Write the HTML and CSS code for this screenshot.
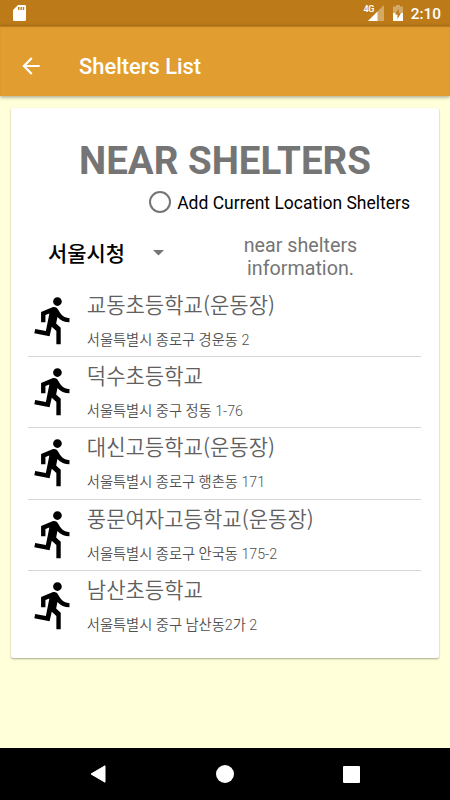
FILE: index.html
```html
<!DOCTYPE html>
<html lang="ko">
<head>
<meta charset="utf-8">
<title>Shelters List</title>
<link rel="stylesheet" href="styles.css">
</head>
<body>
<svg width="0" height="0" class="defs"><symbol id="run" viewBox="0 0 24 24"><path d="M13.49 5.48c1.1 0 2-.9 2-2s-.9-2-2-2-2 .9-2 2 .9 2 2 2zm-3.6 13.9l1-4.4 2.1 2v6h2v-7.5l-2.1-2 .6-3c1.3 1.5 3.3 2.5 5.5 2.5v-2c-1.9 0-3.5-1-4.3-2.4l-1-1.6c-.4-.6-1-1-1.7-1-.3 0-.5.1-.8.1l-5.2 2.2v4.7h2v-3.4l1.8-.7-1.6 8.1-4.9-1-.4 2 7 1.4z"/></symbol></svg>
<div class="screen">
  <div class="status">
    <svg class="sd" width="13" height="16" viewBox="0 0 13 16"><path fill="#fff" fill-rule="evenodd" d="M5 0h6.800q1.200 0 1.200 1.200v13.600q0 1.200-1.200 1.200H1.200q-1.200 0-1.200-1.200V5zM5 2v3h1.400V2zm2.400 0v3h1.400V2zm2.400 0v3h1.400V2z"/></svg>
    <span class="net">4G</span>
    <svg class="signal" width="16" height="16" viewBox="0 0 16 16"><path fill="#fff" fill-opacity=".35" d="M16 0v16H0z"/><path fill="#fff" d="M9.500 6.500V16H0z"/></svg>
    <svg class="battery" width="10" height="16" viewBox="0 0 10 16"><path fill="#fff" fill-opacity=".35" d="M3 0h4v1.500h3V8H0V1.500h3z"/><path fill="#fff" d="M0 8h10v8H0z"/><path fill="#bc7b18" d="M5.700 3.500L2 9.500h2.500V14L8 8H5.700z"/></svg>
    <span class="time">2:10</span>
  </div>
  <header class="bar">
    <svg class="back" width="26" height="26" viewBox="0 0 24 24"><path fill="#fff" d="M20 11H7.830l5.590-5.590L12 4l-8 8 8 8 1.410-1.410L7.830 13H20v-2z"/></svg>
    <h1>Shelters List</h1>
  </header>
  <main>
    <section class="card">
      <h2>NEAR SHELTERS</h2>
      <label class="option"><span class="radio"></span><span>Add Current Location Shelters</span></label>
      <div class="filter">
        <div class="spinner"><span>서울시청</span><svg width="11" height="6" viewBox="0 0 11 6"><path fill="#757575" d="M0 0h11L5.500 5.500z"/></svg></div>
        <p>near shelters<br>information.</p>
      </div>
      <ul>
        <li><svg class="run"><use href="#run"/></svg><div><h3>교동초등학교(운동장)</h3><p>서울특별시 종로구 경운동 2</p></div></li>
        <li><svg class="run"><use href="#run"/></svg><div><h3>덕수초등학교</h3><p>서울특별시 중구 정동 1-76</p></div></li>
        <li><svg class="run"><use href="#run"/></svg><div><h3>대신고등학교(운동장)</h3><p>서울특별시 종로구 행촌동 171</p></div></li>
        <li><svg class="run"><use href="#run"/></svg><div><h3>풍문여자고등학교(운동장)</h3><p>서울특별시 종로구 안국동 175-2</p></div></li>
        <li><svg class="run"><use href="#run"/></svg><div><h3>남산초등학교</h3><p>서울특별시 중구 남산동2가 2</p></div></li>
      </ul>
    </section>
  </main>
  <nav>
    <svg width="17" height="18" viewBox="0 0 17 18"><path fill="#fff" stroke="#fff" stroke-linejoin="round" d="M15 .8v16.400L1 9z"/></svg>
    <svg width="18" height="18" viewBox="0 0 18 18"><circle cx="9" cy="9" r="9" fill="#fff"/></svg>
    <svg width="17" height="17" viewBox="0 0 17 17"><rect width="17" height="17" rx="1" fill="#fff"/></svg>
  </nav>
</div>
</body>
</html>
```

FILE: styles.css
```css
* { box-sizing: border-box; margin: 0; padding: 0; }
body { width: 450px; height: 800px; overflow: hidden; font-family: Roboto, "Noto Sans CJK KR", sans-serif; }
.defs { position: absolute; }
svg { display: block; flex: none; }
.screen { width: 450px; height: 800px; display: flex; flex-direction: column; background: #ffffd9; }
.status { height: 26px; flex: none; display: flex; align-items: flex-start; padding: 5px 9px 0 13px; background: #bc7b18; color: #fff; }
.net { margin-left: auto; font-size: 9px; line-height: 9px; font-weight: 600; letter-spacing: -.6px; }
.signal { margin-left: -6px; }
.battery { margin-left: 9px; }
.time { margin-left: 8px; font-size: 15.4px; line-height: 18px; font-weight: 500; }
.bar { height: 70px; flex: none; display: flex; align-items: center; padding: 10px 18px 0; background: #e19d30; color: #fff; box-shadow: 0 1px 4px rgba(0,0,0,.4), inset 0 1px 1px rgba(120,70,0,.4); }
.bar h1 { margin-left: 35px; padding-top: 1px; font-size: 21.9px; font-weight: 500; line-height: 26px; }
.back { margin-top: -1px; }
main { flex: 1; padding: 12px 11px; }
.card { height: 550px; padding: 30px 17px 0; background: #fff; border-radius: 2px; box-shadow: 0 1px 2px rgba(0,0,0,.35); }
h2 { font-size: 38.5px; line-height: 45px; font-weight: 700; text-align: center; color: #757575; }
.option { display: flex; align-items: center; justify-content: flex-end; height: 38px; padding-right: 12px; font-size: 17.5px; color: #000; }
.radio { width: 22px; height: 22px; border: 2px solid #757575; border-radius: 50%; margin-right: 6px; }
.option span:last-child { padding-top: 1px; }
.filter { display: flex; height: 65px; }
.spinner { width: 156px; display: flex; align-items: center; padding: 0 0 3px 20px; font-size: 20.9px; font-weight: 500; color: #000; }
.spinner svg { margin: 2px 0 0 28px; }
.filter p { flex: 1; padding: 13px 5px 0 0; font-size: 19.7px; line-height: 23px; text-align: center; color: #757575; }
ul { list-style: none; padding-right: 1px; }
li { display: flex; height: 71.2px; border-bottom: 1px solid #d6d6d6; }
li:last-child { border: 0; }
.run { width: 52.4px; height: 52.4px; margin: 8px 6px 0 .4px; }
li h3 { padding-top: 3px; font-family: "Noto Sans CJK KR", sans-serif; font-size: 21.05px; line-height: 30px; font-weight: 350; color: #606060; }
li p { padding-top: 11px; font-size: 14.25px; line-height: 20px; font-weight: 350; color: #505050; }
nav { height: 52px; flex: none; display: flex; align-items: center; justify-content: space-between; padding: 0 90px; background: #000; }
```
